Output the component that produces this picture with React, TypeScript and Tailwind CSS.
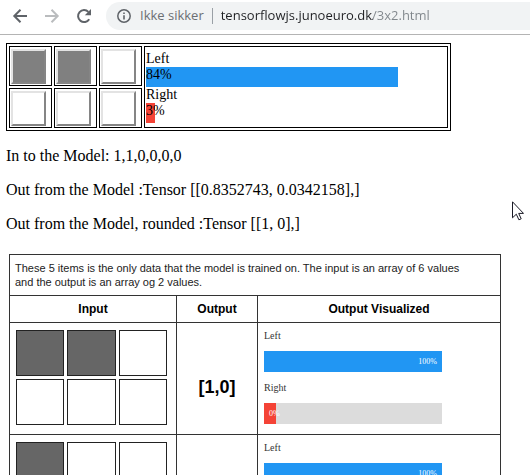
import { useState } from 'react';
import clsx from 'clsx';

const EXAMPLES = [
  { input: [1, 1, 0, 0, 0, 0], output: [1, 0] },
  { input: [1, 0, 0, 0, 0, 0], output: [1, 0] },
];

function BrowserBar() {
  return (
    <header className="flex h-[35px] items-center border-b border-[#b4b4b4] bg-white pb-0.5 pl-3">
      <button type="button" aria-label="Back" className="text-[#5f6368]">
        <svg width="16" height="16" viewBox="0 0 16 16" fill="none" stroke="currentColor" strokeWidth="2">
          <path d="M15 8H2.5M8.5 1.8 2.3 8l6.2 6.2" />
        </svg>
      </button>
      <button type="button" aria-label="Forward" className="ml-4 text-[#babcbe]">
        <svg width="16" height="16" viewBox="0 0 16 16" fill="none" stroke="currentColor" strokeWidth="2">
          <path d="M1 8h12.5M7.5 1.8 13.7 8l-6.2 6.2" />
        </svg>
      </button>
      <button type="button" aria-label="Reload" className="ml-4 text-[#5f6368]">
        <svg width="16" height="16" viewBox="0 0 16 16">
          <path d="M13.2 11.2A6 6 0 1 1 12.4 3.9" fill="none" stroke="currentColor" strokeWidth="2" />
          <path d="M15 1v6.2H8.8z" fill="currentColor" />
        </svg>
      </button>
      <div className="ml-3.5 flex h-7 min-w-0 flex-1 items-center rounded-l-full bg-[#f1f3f4] pl-[11px] font-['Open_Sans','Noto_Sans',sans-serif] text-[13px]">
        <svg width="14" height="14" viewBox="0 0 14 14" className="shrink-0" aria-hidden="true">
          <circle cx="7" cy="7" r="6.2" fill="none" stroke="#5f6368" strokeWidth="1.5" />
          <path d="M7 6.2v4.3M7 3.4v1.6" stroke="#5f6368" strokeWidth="1.6" />
        </svg>
        <span className="ml-[9px] shrink-0 text-[#6b6f73]">Ikke sikker</span>
        <span className="mx-2 h-4 w-px shrink-0 bg-[#9aa0a6]" />
        {/* The host is dark, the path after it is grey */}
        <input
          type="text"
          aria-label="Address"
          defaultValue="tensorflowjs.junoeuro.dk/3x2.html"
          className="min-w-0 flex-1 bg-[linear-gradient(90deg,#202124_152px,#80868b_152px)] bg-clip-text text-transparent outline-none"
        />
      </div>
    </header>
  );
}

function Prediction({ label, value, color }: { label: string; value: number; color: string }) {
  return (
    <div className="w-[300px]">
      <div>{label}</div>
      <div className={clsx('h-5', color)} style={{ width: `${value}%` }}>
        {value}%
      </div>
    </div>
  );
}

function ModelTable() {
  const [pixels, setPixels] = useState([1, 1, 0, 0, 0, 0]);

  const toggle = (index: number) =>
    setPixels(pixels.map((p, i) => (i === index ? 1 - p : p)));

  const renderCell = (index: number) => (
    <td key={index} className="h-10 w-[43px] border border-black p-px align-middle">
      <button
        type="button"
        aria-label={`Pixel ${index + 1}`}
        aria-pressed={pixels[index] === 1}
        onClick={() => toggle(index)}
        className={clsx(
          'block size-[35px] border-2 border-t-[#e3e3e3] border-r-[#858585] border-b-[#858585] border-l-[#e3e3e3]',
          pixels[index] ? 'bg-[#808080]' : 'bg-white',
        )}
      />
    </td>
  );

  return (
    <table className="w-[445px] table-fixed border-separate border-spacing-[2px] border border-black">
      <colgroup>
        <col className="w-[43px]" />
        <col className="w-[43px]" />
        <col className="w-[43px]" />
        <col />
      </colgroup>
      <tbody>
        <tr>
          {[0, 1, 2].map(renderCell)}
          <td rowSpan={2} className="border border-black p-px align-middle text-sm leading-4">
            <Prediction label="Left" value={84} color="bg-[#2196f3]" />
            <Prediction label="Right" value={3} color="bg-[#f44336]" />
          </td>
        </tr>
        <tr>{[3, 4, 5].map(renderCell)}</tr>
      </tbody>
    </table>
  );
}

function Meter({ label, value }: { label: string; value: number }) {
  return (
    <div>
      <div className="text-[10px] leading-3 text-[#333]">{label}</div>
      <div className="mt-[9px] h-[21px] w-[178px] bg-[#dcdcdc] text-[8px] leading-[21px] text-white">
        {value > 0 ? (
          <div className="h-full bg-[#2196f3] pr-[5px] text-right" style={{ width: `${value}%` }}>
            {value}%
          </div>
        ) : (
          <div className="h-full w-3 bg-[#f44336] pl-[5px]">{value}%</div>
        )}
      </div>
    </div>
  );
}

function TrainingTable() {
  return (
    <table className="ml-[3px] w-[492px] table-fixed border-collapse border border-[#333] font-['Liberation_Sans',Arial,sans-serif]">
      <colgroup>
        <col className="w-[167px]" />
        <col className="w-[81px]" />
        <col />
      </colgroup>
      <thead>
        <tr>
          <th
            colSpan={3}
            className="h-[41px] border border-[#333] pr-6 pl-[5px] text-left align-middle text-[11px] leading-[14px] font-normal text-[#222]"
          >
            These 5 items is the only data that the model is trained on. The input is an array of 6 values
            <br />
            and the output is an array og 2 values.
          </th>
        </tr>
        <tr className="h-[27px] text-xs">
          <th className="border border-[#333]">Input</th>
          <th className="border border-[#333]">Output</th>
          <th className="border border-[#333]">Output Visualized</th>
        </tr>
      </thead>
      <tbody>
        {EXAMPLES.map((example, row) => (
          <tr key={row} className="h-28">
            <td className="border border-[#333] px-1.5 pt-[7px] align-top">
              <div className="grid w-[151px] grid-cols-3 gap-[3px]">
                {example.input.map((on, i) => (
                  <div key={i} className={clsx('h-[46px] border border-[#222]', on ? 'bg-[#666]' : 'bg-white')} />
                ))}
              </div>
            </td>
            <td className="border border-[#333] pt-4 text-center text-lg font-bold">
              [{example.output.join(',')}]
            </td>
            <td className="border border-[#333] pt-[7px] pl-1.5 align-top font-['Liberation_Serif','Times_New_Roman',serif]">
              <div className="flex flex-col gap-2.5">
                <Meter label="Left" value={example.output[0] * 100} />
                <Meter label="Right" value={example.output[1] * 100} />
              </div>
            </td>
          </tr>
        ))}
      </tbody>
    </table>
  );
}

export default function App() {
  return (
    <div className="relative h-screen overflow-hidden bg-white font-['Liberation_Serif','Times_New_Roman',serif] text-black">
      <BrowserBar />
      <main className="px-1.5 pt-2">
        <ModelTable />
        <div className="mt-4 mb-[21px] flex flex-col gap-4 text-base leading-[18px]">
          <p>In to the Model: 1,1,0,0,0,0</p>
          <p>Out from the Model :Tensor [[0.8352743, 0.0342158],]</p>
          <p>Out from the Model, rounded :Tensor [[1, 0],]</p>
        </div>
        <TrainingTable />
      </main>

      {/* Mouse pointer */}
      <svg width="12" height="20" viewBox="0 0 12 20" className="absolute top-[201px] left-[512px]" aria-hidden="true">
        <path d="M.5.8v16l3.8-3.6 2.6 5.6 2.3-1-2.5-5.4h4.8z" fill="#fff" stroke="#1a1a26" />
      </svg>
    </div>
  );
}
